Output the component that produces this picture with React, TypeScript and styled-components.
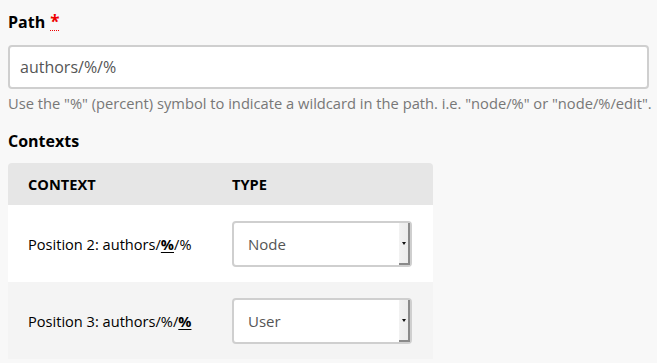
import * as React from "react";
import styled, { createGlobalStyle } from "styled-components";

const GlobalStyle = createGlobalStyle`
  body {
    margin: 0;
    background: #f8f8f8;
    font-family: "Open Sans", "Liberation Sans", sans-serif;
    color: #000;
  }
`;

const Page = styled.div`
  padding: 11px 8px 0;
`;

const Label = styled.div`
  font-size: 16px;
  font-weight: 700;
  line-height: 22px;
`;

const Required = styled.abbr`
  display: inline-block;
  color: #e00;
  font-size: 17px;
  line-height: 16px;
  text-decoration: none;
  border-bottom: 1px dotted #e00;
  margin-left: 5px;
`;

const TextInput = styled.input`
  display: block;
  box-sizing: border-box;
  width: 100%;
  max-width: 641px;
  height: 44px;
  margin-top: 12px;
  padding: 0 10px;
  border: 2px solid #cfcfcf;
  border-radius: 4px;
  background: #fff;
  font-family: inherit;
  font-size: 16px;
  color: #555;
  outline: none;
`;

const Help = styled.div`
  margin-top: 4px;
  font-size: 14.7px;
  line-height: 20px;
  color: #777;
  white-space: nowrap;
`;

const SectionLabel = styled(Label)`
  margin-top: 17px;
`;

const Table = styled.table`
  margin-top: 11px;
  width: 425px;
  border-collapse: separate;
  border-spacing: 0;
  border-radius: 4px 4px 0 0;
  overflow: hidden;
`;

const HeadCell = styled.th<{ $width?: number }>`
  background: #e6e6e6;
  height: 42px;
  padding: 0 0 0 20px;
  text-align: left;
  font-size: 14.6px;
  font-weight: 700;
  text-transform: uppercase;
  width: ${(p) => (p.$width ? `${p.$width}px` : "auto")};
  box-sizing: border-box;
`;

const Row = styled.tr<{ $odd?: boolean }>`
  background: ${(p) => (p.$odd ? "#f4f4f4" : "#fff")};
`;

const Cell = styled.td`
  height: 77px;
  padding: 0 0 0 20px;
  font-size: 14.6px;
  box-sizing: border-box;
`;

const SelectCell = styled(Cell)`
  padding-right: 21px;
`;

const Wild = styled.strong`
  text-decoration: underline;
  text-underline-offset: 2px;
`;

const SelectBox = styled.div`
  position: relative;
  box-sizing: border-box;
  width: 180px;
  height: 46px;
  border: 2px solid #cfcfcf;
  border-radius: 4px;
  background: #fff;
  display: flex;
  align-items: center;
  padding-left: 14px;
  font-size: 15px;
  color: #555;
`;

const DropButton = styled.span`
  position: absolute;
  top: 0;
  right: 0;
  bottom: 0;
  width: 11px;
  background: linear-gradient(to right, #f2f2f2, #ececec);
  border-right: 2px solid #8a8a8a;
  border-bottom: 2px solid #8a8a8a;
  box-sizing: border-box;
  display: flex;
  align-items: center;
  justify-content: center;

  &::after {
    content: "";
    display: block;
    margin-top: 2px;
    border-left: 2.5px solid transparent;
    border-right: 2.5px solid transparent;
    border-top: 3px solid #111;
  }
`;

const rows = [
  { pos: 2, value: "Node" },
  { pos: 3, value: "User" },
];

const App: React.FC = () => {
  return (
    <Page>
      <GlobalStyle />
      <Label>
        Path<Required title="This field is required.">*</Required>
      </Label>
      <TextInput defaultValue="authors/%/%" />
      <Help>
        Use the "%" (percent) symbol to indicate a wildcard in the path. i.e. "node/%" or "node/%/edit".
      </Help>
      <SectionLabel>Contexts</SectionLabel>
      <Table>
        <thead>
          <tr>
            <HeadCell $width={204}>Context</HeadCell>
            <HeadCell>Type</HeadCell>
          </tr>
        </thead>
        <tbody>
          {rows.map((r, i) => (
            <Row key={r.pos} $odd={i % 2 === 1}>
              <Cell>
                Position {r.pos}: authors/
                {r.pos === 2 ? <Wild>%</Wild> : "%"}/
                {r.pos === 3 ? <Wild>%</Wild> : "%"}
              </Cell>
              <SelectCell>
                <SelectBox>
                  {r.value}
                  <DropButton />
                </SelectBox>
              </SelectCell>
            </Row>
          ))}
        </tbody>
      </Table>
    </Page>
  );
};

export default App;
